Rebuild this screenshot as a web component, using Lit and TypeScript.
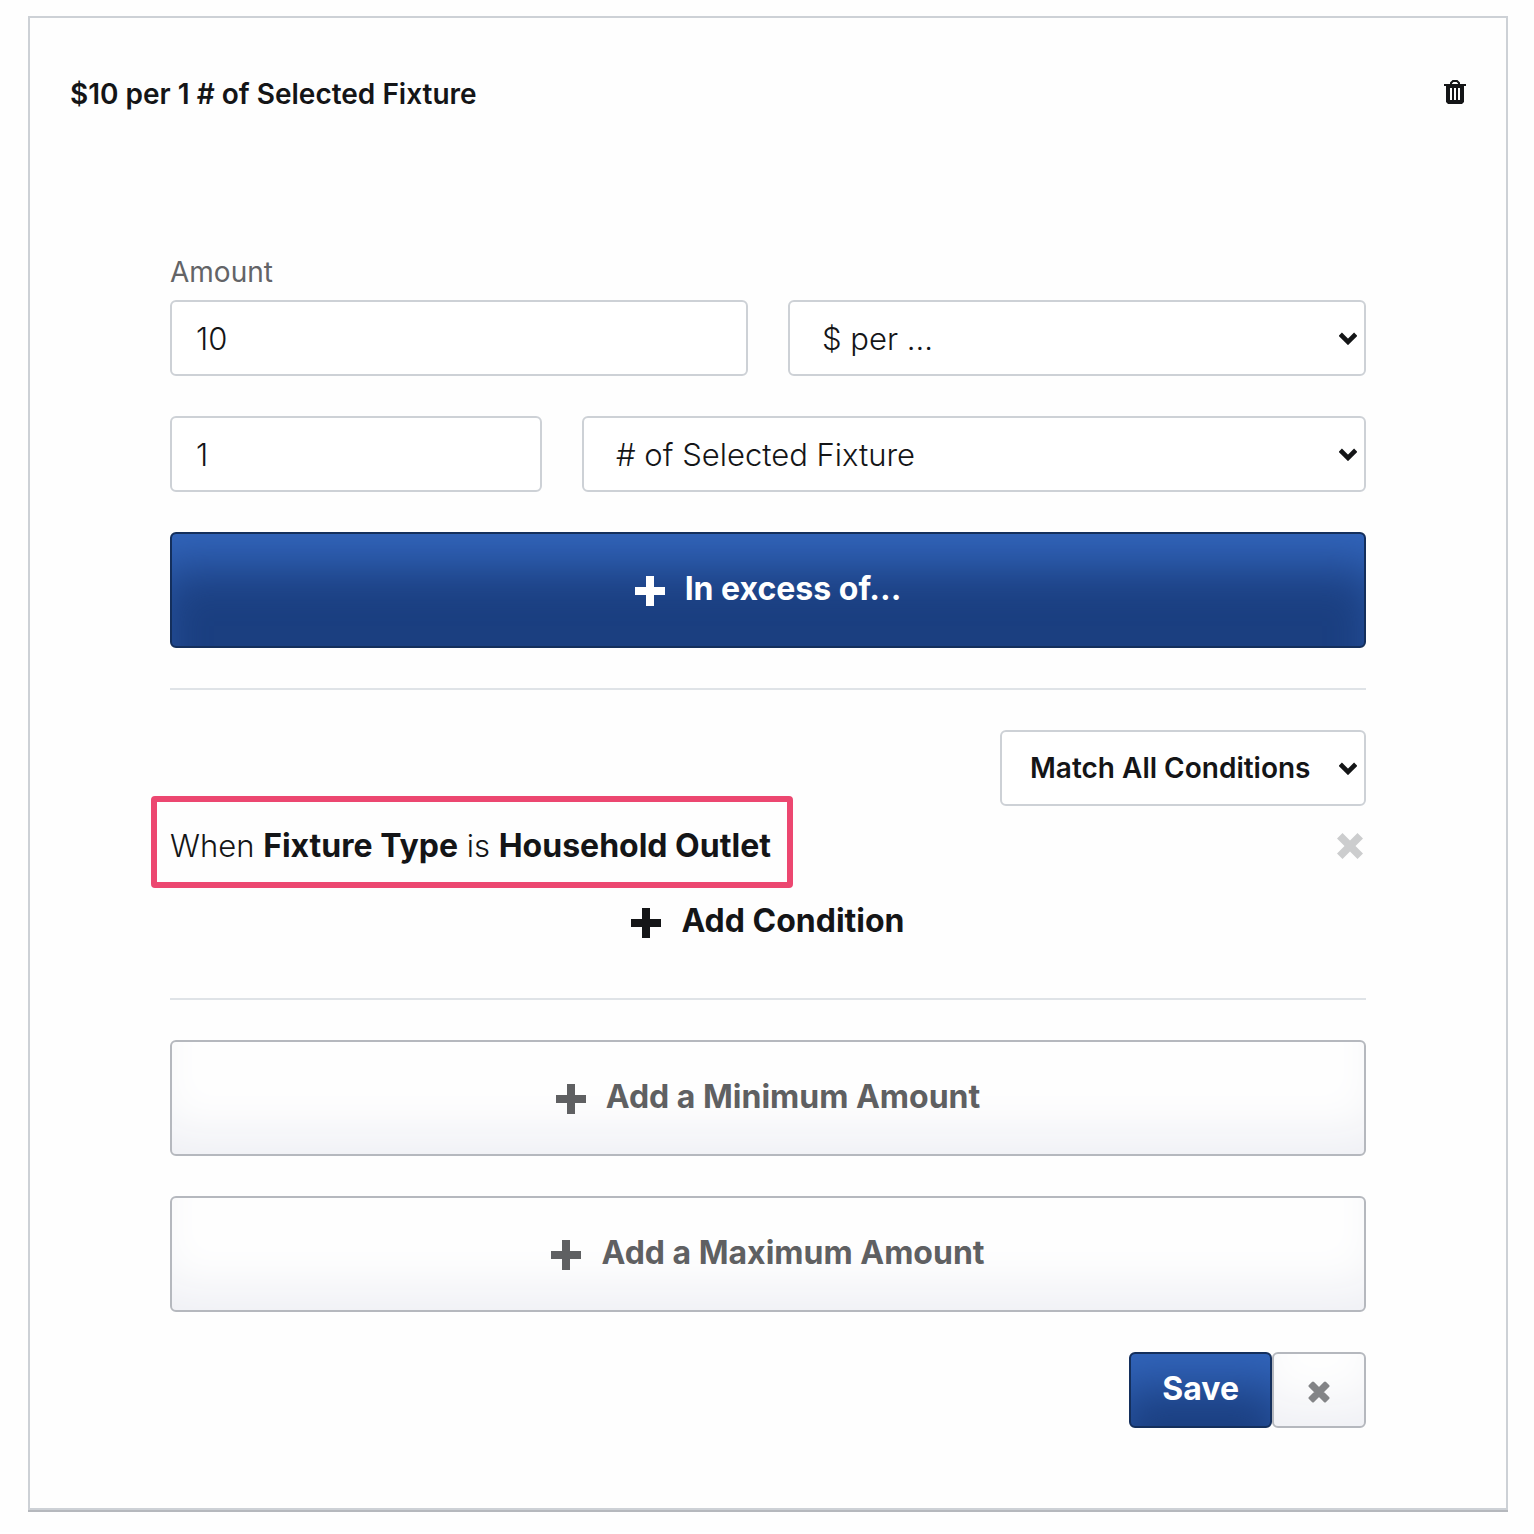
import { LitElement, html, css, svg } from "lit";
import { customElement } from "lit/decorators.js";

const plusIcon = svg`<svg class="plus" viewBox="0 0 30 30" aria-hidden="true">
  <path fill="currentColor" d="M11 0h8v11h11v8H19v11h-8V19H0v-8h11z" />
</svg>`;

const caretIcon = svg`<svg class="caret" viewBox="0 0 18 14" aria-hidden="true">
  <path fill="none" stroke="currentColor" stroke-width="4.600" d="M1.300 3.200 9 10.900l7.700-7.700" />
</svg>`;

const crossIcon = svg`<svg class="cross" viewBox="0 0 26 26" aria-hidden="true">
  <path fill="currentColor" d="M5.500 0 13 7.500 20.500 0 26 5.500 18.500 13 26 20.500 20.500 26 13 18.500 5.500 26 0 20.500 7.500 13 0 5.500z" />
</svg>`;

const roundCrossIcon = svg`<svg class="round-cross" viewBox="0 0 22 22" aria-hidden="true">
  <path fill="currentColor" stroke="currentColor" stroke-width="3" stroke-linejoin="round" d="M5 2 11 8 17 2 20 5 14 11 20 17 17 20 11 14 5 20 2 17 8 11 2 5z" />
</svg>`;

const trashIcon = svg`<svg class="trash" viewBox="0 0 22 24" aria-hidden="true">
  <path fill="none" stroke="currentColor" stroke-width="2" d="M7 4.500V3l2-2h4l2 2v1.500" />
  <path fill="currentColor" d="M0 4h22v2H0z" />
  <path fill="currentColor" fill-rule="evenodd" d="M2 6h18v16l-2 2H4l-2-2zM6 8v12h2V8zM10 8v12h2V8zM14 8v12h2V8z" />
</svg>`;

@customElement("app-root")
export class AppRoot extends LitElement {
  static styles = css`
    :host {
      display: block;
      padding: 16px 26px 22px 28px;
      background: #fefefe;
      color: #141517;
      font-family: Inter, "Liberation Sans", sans-serif;
    }
    * {
      box-sizing: border-box;
    }
    svg {
      display: block;
      flex: none;
    }
    button,
    input,
    select {
      margin: 0;
      font: inherit;
      color: inherit;
    }
    button {
      cursor: pointer;
    }
    strong {
      font-size: 32px;
      font-weight: 700;
    }
    .card {
      padding: 60px 40px 80px;
      border: 2px solid #cdd1d6;
      box-shadow: 0 2px 0 #b5b8bd;
    }
    .header {
      display: flex;
      align-items: center;
      justify-content: space-between;
    }
    .title {
      margin: 0;
      font-size: 28px;
      line-height: 32px;
      font-weight: 600;
    }
    .bare {
      display: flex;
      padding: 0;
      border: 0;
      background: none;
    }
    .trash {
      width: 22px;
      height: 24px;
      margin-bottom: 4px;
    }
    .form {
      display: grid;
      gap: 40px;
      padding: 146px 100px 0;
    }
    .row {
      display: grid;
      grid-template-columns: repeat(12, minmax(0, 1fr));
      column-gap: 40px;
      align-items: end;
    }
    .span4 {
      grid-column: span 4;
    }
    .span6 {
      grid-column: span 6;
    }
    .span8 {
      grid-column: span 8;
    }
    .label {
      display: block;
      margin-bottom: 12px;
      font-size: 28px;
      line-height: 32px;
      color: #636467;
    }
    .control {
      display: block;
      width: 100%;
      height: 76px;
      border: 2px solid #cdd1d6;
      border-radius: 6px;
      background: #fff;
      font-size: 31px;
      font-weight: 350;
    }
    input.control {
      padding: 0 24px;
    }
    .picker {
      display: grid;
      align-items: center;
    }
    .picker > * {
      grid-area: 1 / 1;
    }
    .picker .control {
      appearance: none;
      padding: 0 53px 0 32px;
    }
    .caret {
      width: 18px;
      height: 14px;
      margin-right: 9px;
      justify-self: end;
      pointer-events: none;
    }
    .big {
      display: flex;
      align-items: center;
      justify-content: center;
      gap: 20px;
      width: 100%;
      height: 116px;
      padding: 0 0 4px;
      border: 2px solid;
      border-radius: 6px;
      font-size: 32px;
      font-weight: 700;
    }
    .plus {
      width: 30px;
      height: 30px;
      margin-top: 6px;
    }
    .rule {
      width: 100%;
      height: 2px;
      margin: 0;
      border: 0;
      background: #dfe3e7;
    }
    .conditions {
      display: grid;
    }
    .match {
      justify-self: end;
    }
    .match .control {
      width: auto;
      padding-left: 28px;
      font-size: 28px;
      font-weight: 600;
    }
    .condition {
      display: flex;
      align-items: center;
      justify-content: space-between;
      height: 76px;
      padding: 4px 3px 0 0;
      color: #cccdce;
    }
    .condition-text {
      position: relative;
      margin: 0;
      font-size: 31px;
      line-height: 40px;
      font-weight: 300;
      color: #141517;
    }
    .condition-text::after {
      content: "";
      position: absolute;
      inset: -30px -22px -22px -19px;
      border: 6px solid #ec4770;
      border-radius: 4px;
    }
    .cross {
      width: 26px;
      height: 26px;
    }
    .add {
      align-items: center;
      justify-content: center;
      justify-self: center;
      gap: 20px;
      height: 76px;
      font-size: 32px;
      font-weight: 700;
    }
    .actions {
      display: flex;
      justify-content: flex-end;
    }
    .action {
      display: flex;
      align-items: center;
      height: 76px;
      padding: 0 31px 4px;
      border: 2px solid;
      border-radius: 6px;
      font-size: 32px;
      font-weight: 700;
    }
    .primary {
      border-color: #142f5c;
      background: #1b3f80;
      box-shadow: inset 0 50px 50px -18px #3265bb;
      color: #fff;
    }
    .secondary {
      border-color: #b5b8be;
      background: #fefefe;
      box-shadow: inset 0 -38px 50px -18px #eeeff4;
      color: #5f6062;
    }
    .cancel {
      padding: 4px 34px 0;
      color: #838487;
    }
    .round-cross {
      width: 22px;
      height: 22px;
    }
  `;

  render() {
    return html`
      <section class="card">
        <header class="header">
          <h2 class="title">$10 per 1 # of Selected Fixture</h2>
          <button class="bare" type="button" aria-label="Delete fee">${trashIcon}</button>
        </header>
        <form class="form" @submit=${(e: Event) => e.preventDefault()}>
          <div class="row">
            <div class="span6">
              <label class="label" for="amount">Amount</label>
              <input class="control" id="amount" type="text" inputmode="decimal" value="10" />
            </div>
            <div class="span6 picker">
              <select class="control" aria-label="Amount type">
                <option>$ per ...</option>
              </select>
              ${caretIcon}
            </div>
          </div>
          <div class="row">
            <div class="span4">
              <input class="control" type="text" inputmode="decimal" value="1" aria-label="Quantity" />
            </div>
            <div class="span8 picker">
              <select class="control" aria-label="Unit">
                <option># of Selected Fixture</option>
              </select>
              ${caretIcon}
            </div>
          </div>
          <button class="big primary" type="button">${plusIcon}<span>In excess of...</span></button>
          <hr class="rule" />
          <div class="conditions">
            <div class="picker match">
              <select class="control" aria-label="Condition matching">
                <option>Match All Conditions</option>
              </select>
              ${caretIcon}
            </div>
            <div class="condition">
              <p class="condition-text">When <strong>Fixture Type</strong> is <strong>Household Outlet</strong></p>
              <button class="bare" type="button" aria-label="Remove condition">${crossIcon}</button>
            </div>
            <button class="bare add" type="button">${plusIcon}<span>Add Condition</span></button>
          </div>
          <hr class="rule" />
          <button class="big secondary" type="button">${plusIcon}<span>Add a Minimum Amount</span></button>
          <button class="big secondary" type="button">${plusIcon}<span>Add a Maximum Amount</span></button>
          <div class="actions">
            <button class="action primary" type="submit">Save</button>
            <button class="action secondary cancel" type="button" aria-label="Cancel">${roundCrossIcon}</button>
          </div>
        </form>
      </section>
    `;
  }
}
